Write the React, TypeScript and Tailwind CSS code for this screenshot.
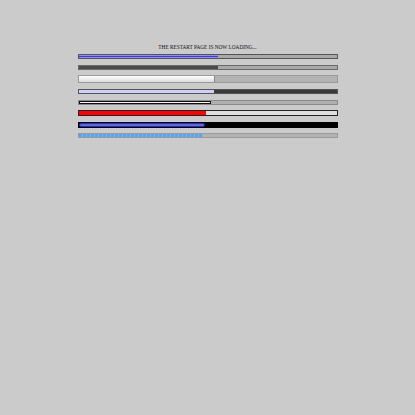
type Bar = {
  pct: number
  h: string
  mt: string
  track: string
  fill: string
}

// one row per skin of the loading bar
const bars: Bar[] = [
  {
    pct: 54.2,
    h: "h-[5px]",
    mt: "mt-[3px]",
    track: "border border-[#555] bg-[#a9a9a9]",
    fill: "bg-[#3a3ad6] border-y border-[#8f8ff0]",
  },
  {
    pct: 54.2,
    h: "h-[5px]",
    mt: "mt-[6px]",
    track: "border border-[#6a6a6a] bg-[#a9a9a9]",
    fill: "bg-[#4a4a4a]",
  },
  {
    pct: 53.1,
    h: "h-[8px]",
    mt: "mt-[5px]",
    track: "border border-[#9a9a9a] bg-[#b3b3b3]",
    fill: "bg-gradient-to-b from-[#ffffff] to-[#dcdcdc] border-r border-[#888]",
  },
  {
    pct: 52.7,
    h: "h-[5px]",
    mt: "mt-[6px]",
    track: "border border-[#555] bg-[#3b3b3b]",
    fill: "bg-[#cfcff8]",
  },
  {
    pct: 51.2,
    h: "h-[5px]",
    mt: "mt-[6px]",
    track: "border border-[#8a8a8a] bg-[#b0b0b0]",
    fill: "bg-[#f2f2f2] border border-[#111]",
  },
  {
    pct: 49.6,
    h: "h-[6px]",
    mt: "mt-[5px]",
    track: "border border-[#222] bg-[#dedede]",
    fill: "bg-[#ff0000]",
  },
  {
    pct: 49,
    h: "h-[6px]",
    mt: "mt-[6px]",
    track: "border border-black bg-black",
    fill: "bg-[#5a6ae6] border border-[#2a2ab0] rounded-[2px]",
  },
  {
    pct: 48.2,
    h: "h-[5px]",
    mt: "mt-[5px]",
    track: "border border-[#9a9a9a] bg-[#b3b3b3]",
    fill: "bg-[repeating-linear-gradient(90deg,#5aa2ec_0px,#5aa2ec_3px,#7fb8f0_3px,#7fb8f0_4px)]",
  },
]

export default function App() {
  return (
    <div className="w-[415px] h-[415px] bg-[#cbcbcb] pt-[44px]">
      <div className="w-[260px] mx-auto flex flex-col">
        <p className="text-center text-[5.3px] leading-[7px] text-[#111] font-['Liberation_Serif',serif]">
          THE RESTART PAGE IS NOW LOADING...
        </p>
        {bars.map((b, i) => (
          <div key={i} className={`${b.mt} ${b.h} ${b.track} flex overflow-hidden`}>
            <div className={`${b.fill} h-full`} style={{ width: `${b.pct}%` }} />
          </div>
        ))}
      </div>
    </div>
  )
}
